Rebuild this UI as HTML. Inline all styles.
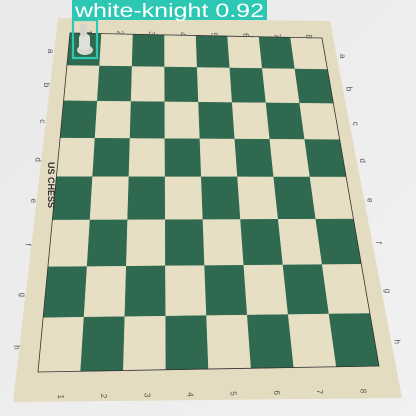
<!DOCTYPE html>
<html><head><meta charset="utf-8">
<style>
html,body{margin:0;padding:0;width:416px;height:416px;overflow:hidden;background:#ebebeb;}
svg{display:block}
</style></head>
<body>
<svg id="s" width="416" height="416" viewBox="0 0 416 416" xmlns="http://www.w3.org/2000/svg">
<defs>
<linearGradient id="bg" x1="0" y1="0" x2="1" y2="1">
<stop offset="0" stop-color="#e9e9ea"/><stop offset="1" stop-color="#f1f1f1"/>
</linearGradient>
</defs>
<rect width="416" height="416" fill="url(#bg)"/>
<polygon points="58,18 330,21 402,398 13,402" fill="#e4dcc0"/>
<g id="cells"></g>
<g id="labels" font-family="Liberation Sans, sans-serif" font-size="8" fill="#555"></g>
<ellipse cx="85" cy="50" rx="8" ry="5" fill="#d8d8d0"/>
<rect x="79" y="34" width="11" height="16" rx="4" fill="#e0e0da"/>
<rect x="80" y="24" width="7" height="12" rx="3" fill="#d4d4cc"/>
<rect x="73" y="20" width="24" height="38" fill="none" stroke="#2cc8b4" stroke-width="2.2"/>
<rect x="72" y="0" width="195" height="20" fill="#2cc8b4"/>
<text x="75" y="17" font-family="Liberation Sans, sans-serif" font-size="19" fill="#fff" textLength="189" lengthAdjust="spacingAndGlyphs">white-knight 0.92</text>
</svg>
<script>
var TL=[70,33],TR=[322,38],BL=[38,372],BR=[379,366];
var VV=[0,.096,.2,.31,.424,.552,.69,.84,1];
function vmap(x){if(x<=0)return x*0.1/1;if(x>=1)return 1+(x-1);var i=Math.floor(x*8),f=x*8-i;return VV[i]+(VV[i+1]-VV[i])*f;}
function P(u,v0){var v=vmap(v0);return[(1-u)*(1-v)*TL[0]+u*(1-v)*TR[0]+(1-u)*v*BL[0]+u*v*BR[0],(1-u)*(1-v)*TL[1]+u*(1-v)*TR[1]+(1-u)*v*BL[1]+u*v*BR[1]];}
var g=document.getElementById('cells'),h='';
for(var r=0;r<8;r++)for(var c=0;c<8;c++){
var a=P(c/8,r/8),b=P((c+1)/8,r/8),d=P((c+1)/8,(r+1)/8),e=P(c/8,(r+1)/8);
var col=((r+c)%2==0)?'#2f6a50':'#e6dfc3';
h+='<polygon points="'+[a,b,d,e].map(function(p){return p[0].toFixed(1)+','+p[1].toFixed(1)}).join(' ')+'" fill="'+col+'" stroke="'+col+'" stroke-width="0.5"/>';}
h+='<polygon points="'+[TL,TR,BR,BL].map(function(p){return p.join(',')}).join(' ')+'" fill="none" stroke="#333" stroke-width="0.8"/>';
g.innerHTML=h;
var L=document.getElementById('labels'),t='',ls='abcdefgh';
for(var i=0;i<8;i++){var p=P(-0.08,(i+0.5)/8);t+='<text x="'+p[0]+'" y="'+p[1]+'" transform="rotate(90 '+p[0]+' '+p[1]+')">'+ls[i]+'</text>';
p=P(1.06,(i+0.5)/8);t+='<text x="'+p[0]+'" y="'+p[1]+'" transform="rotate(90 '+p[0]+' '+p[1]+')">'+ls[i]+'</text>';
p=P((i+0.5)/8,1.05);t+='<text x="'+(p[0]-2)+'" y="'+(p[1]+8)+'" transform="rotate(90 '+p[0]+' '+(p[1]+8)+')">'+(i+1)+'</text>';
p=P((i+0.5)/8,-0.04);t+='<text x="'+p[0]+'" y="'+(p[1]-2)+'" transform="rotate(90 '+p[0]+' '+(p[1]-2)+')">'+(i+1)+'</text>';}
t+='<text x="48" y="162" font-size="9" font-weight="bold" fill="#333" transform="rotate(90 48 162)">US CHESS</text>';
L.innerHTML=t;
</script>
</body></html>
